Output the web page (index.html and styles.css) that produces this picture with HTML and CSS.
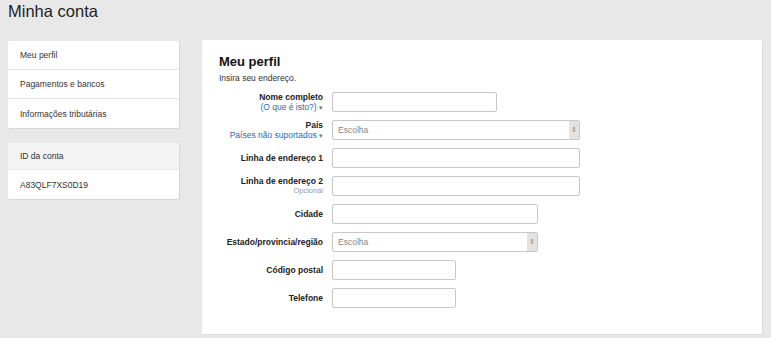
FILE: index.html
```html
<!DOCTYPE html>
<html lang="pt">
<head>
  <meta charset="UTF-8" />
  <title>Minha conta</title>
  <link rel="stylesheet" href="styles.css">
</head>
<body>
  <h1 class="page-title">Minha conta</h1>

  <div class="layout">
    <!-- Sidebar -->
    <aside class="sidebar">
      <nav class="side-card">
        <a class="side-item" href="#">Meu perfil</a>
        <a class="side-item" href="#">Pagamentos e bancos</a>
        <a class="side-item" href="#">Informações tributárias</a>
      </nav>
      <div class="side-card">
        <div class="side-item side-head">ID da conta</div>
        <div class="side-item">A83QLF7XS0D19</div>
      </div>
    </aside>

    <!-- Profile form -->
    <main class="panel">
      <h2 class="panel-title">Meu perfil</h2>
      <p class="panel-sub">Insira seu endereço.</p>

      <form class="form">
        <div class="label">
          <strong>Nome completo</strong>
          <a class="help" href="#">(O que é isto?) <span class="caret">▾</span></a>
        </div>
        <input class="field w-md" type="text">

        <div class="label">
          <strong>País</strong>
          <a class="help" href="#">Países não suportados <span class="caret">▾</span></a>
        </div>
        <div class="select w-lg"><span>Escolha</span><i class="arrows">⇕</i></div>

        <div class="label"><strong>Linha de endereço 1</strong></div>
        <input class="field w-lg" type="text">

        <div class="label">
          <strong>Linha de endereço 2</strong>
          <span class="hint">Opcional</span>
        </div>
        <input class="field w-lg" type="text">

        <div class="label"><strong>Cidade</strong></div>
        <input class="field w-mdl" type="text">

        <div class="label"><strong>Estado/provincia/região</strong></div>
        <div class="select w-mdl"><span>Escolha</span><i class="arrows">⇕</i></div>

        <div class="label"><strong>Código postal</strong></div>
        <input class="field w-sm" type="text">

        <div class="label"><strong>Telefone</strong></div>
        <input class="field w-sm" type="text">
      </form>
    </main>
  </div>
</body>
</html>
```

FILE: styles.css
```css
* {
  margin: 0;
  padding: 0;
  box-sizing: border-box;
}

body {
  font-family: "Liberation Sans", Arial, sans-serif;
  font-size: 8.5px;
  color: #222;
  background: #e8e8e8;
  padding: 0 9px 0 8px;
  height: 338px;
  overflow: hidden;
}

/* Header */
.page-title {
  font-size: 16.5px;
  font-weight: normal;
  color: #1e1e1e;
  line-height: 20px;
  padding-top: 1px;
  height: 40px;
}

.layout {
  display: flex;
  gap: 23px;
  align-items: flex-start;
}

/* Sidebar */
.sidebar {
  width: 171px;
  flex: none;
  display: flex;
  flex-direction: column;
  gap: 15px;
  padding-top: 1px;
}

.side-card {
  background: #fff;
  box-shadow: 1px 1px 0 #d6d6d6;
  border-radius: 2px;
  display: flex;
  flex-direction: column;
}

.side-item {
  display: flex;
  align-items: center;
  height: 29px;
  padding-left: 12px;
  color: #333;
  text-decoration: none;
  border-bottom: 1px solid #e6e6e6;
}

.side-item:last-child {
  border-bottom: none;
}

.side-head {
  background: #f3f3f3;
  height: 27px;
}

/* Main panel */
.panel {
  width: 560px;
  height: 294px;
  background: #fff;
  box-shadow: 1px 1px 0 #d9d9d9;
  padding: 14px 17px;
}

.panel-title {
  font-size: 13px;
  font-weight: bold;
  color: #111;
  line-height: 16px;
}

.panel-sub {
  margin-top: 3px;
  line-height: 10px;
  color: #333;
}

.form {
  display: grid;
  grid-template-columns: 104px auto;
  grid-auto-rows: 20px;
  column-gap: 9px;
  row-gap: 8px;
  justify-items: start;
  align-items: center;
  margin-top: 9px;
}

.label {
  justify-self: end;
  text-align: right;
  display: flex;
  flex-direction: column;
  align-items: flex-end;
  line-height: 10px;
  white-space: nowrap;
}

.label strong {
  font-weight: bold;
  color: #222;
}

.help {
  color: #1f6cb0;
  text-decoration: none;
}

.caret {
  color: #777;
  font-size: 7px;
}

.hint {
  color: #999;
  font-size: 7.5px;
}

.field,
.select {
  height: 20px;
  border: 1px solid #c8c8c8;
  border-radius: 2px;
  background: #fff;
  font: inherit;
}

.select {
  display: flex;
  align-items: center;
  justify-content: space-between;
  padding-left: 5px;
  color: #888;
  overflow: hidden;
}

.arrows {
  font-style: normal;
  width: 10px;
  height: 100%;
  background: #e2e2e2;
  color: #888;
  font-size: 7px;
  display: flex;
  align-items: center;
  justify-content: center;
}

.w-sm { width: 124px; }
.w-md { width: 165px; }
.w-mdl { width: 206px; }
.w-lg { width: 248px; }
```
